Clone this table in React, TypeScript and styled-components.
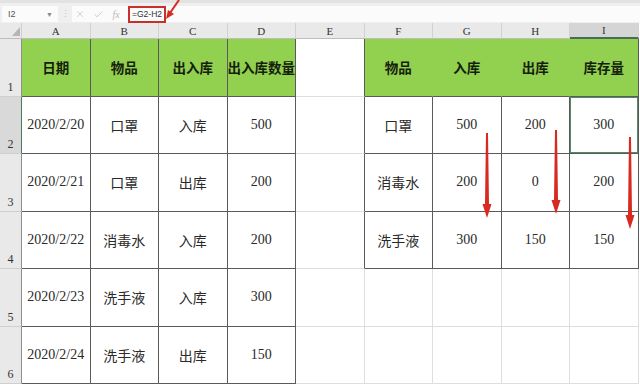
import React from 'react';
import styled, { createGlobalStyle } from 'styled-components';
import { X, Check } from 'lucide-react';

const GlobalStyle = createGlobalStyle`
  body {
    margin: 0;
    background: #ffffff;
    overflow: hidden;
  }
`;

const Page = styled.div`
  position: relative;
  width: 640px;
  height: 384px;
  overflow: hidden;
  background: #ffffff;
  font-family: 'Liberation Serif', 'Noto Sans CJK SC', serif;
`;

const FormulaBar = styled.div`
  display: flex;
  align-items: center;
  height: 23px;
  box-sizing: border-box;
  padding: 3px 0 1px 0;
  background: #efefef;
  border-top: 3px solid #e2e2e2;
`;

const NameBox = styled.div`
  display: flex;
  align-items: center;
  justify-content: space-between;
  width: 56px;
  height: 16px;
  box-sizing: border-box;
  margin-left: 2px;
  padding: 0 5px 0 6px;
  background: #fbfbfb;
  font-family: 'Liberation Sans', sans-serif;
  font-size: 9px;
  color: #555;
`;

const Caret = styled.span`
  font-size: 7px;
  color: #888;
`;

const Grip = styled.div`
  width: 14px;
  text-align: center;
  font-size: 9px;
  color: #c4c4c4;
`;

const InputArea = styled.div`
  flex: 1;
  display: flex;
  align-items: center;
  height: 16px;
  background: #fbfbfb;
  padding-left: 2px;
  gap: 6px;
`;

const ToolIcon = styled.span`
  display: flex;
  align-items: center;
  justify-content: center;
  width: 12px;
  color: #b8b8b8;
  font-family: 'Liberation Serif', serif;
  font-style: italic;
  font-size: 10px;
`;

const FormulaText = styled.div`
  padding: 0 2px;
  height: 17px;
  box-sizing: border-box;
  display: flex;
  align-items: center;
  border: 2px solid #c9302c;
  font-family: 'Liberation Sans', sans-serif;
  font-size: 8.5px;
  color: #333;
`;

const Sheet = styled.div`
  display: grid;
  grid-template-columns: 22px repeat(9, 68.5px);
  grid-template-rows: 16px repeat(6, 57.5px);
`;

const Corner = styled.div`
  background: #e9e9e9;
  border-right: 1px solid #cfcfcf;
  border-bottom: 1px solid #bdbdbd;
  display: flex;
  align-items: flex-end;
  justify-content: flex-end;
  padding: 0 1px 2px 0;
`;

const ColHead = styled.div<{ $active?: boolean }>`
  display: flex;
  align-items: center;
  justify-content: center;
  background: ${(p) => (p.$active ? '#d5d5d5' : '#e9e9e9')};
  border-right: 1px solid #d2d2d2;
  border-bottom: ${(p) => (p.$active ? '2px solid #4a6b57' : '1px solid #bdbdbd')};
  font-size: 11px;
  color: #333;
`;

const RowHead = styled.div<{ $active?: boolean }>`
  display: flex;
  align-items: flex-end;
  justify-content: center;
  padding-bottom: 1px;
  box-sizing: border-box;
  background: ${(p) => (p.$active ? '#d9d9d9' : '#e9e9e9')};
  border-right: 1px solid ${(p) => (p.$active ? '#4a7a5c' : '#8e8e8e')};
  border-bottom: 1px solid #cfcfcf;
  font-size: 12px;
  color: #333;
`;

const Cell = styled.div<{ $head?: boolean; $edge?: 'dark' | 'green' | 'light'; $bottom?: 'dark' | 'light'; $selected?: boolean }>`
  display: flex;
  align-items: center;
  justify-content: center;
  box-sizing: border-box;
  background: ${(p) => (p.$head ? '#92d050' : '#ffffff')};
  border-right: 1px solid
    ${(p) => (p.$edge === 'dark' ? '#5a5a5a' : p.$edge === 'green' ? '#92d050' : '#dedede')};
  border-bottom: 1px solid ${(p) => (p.$bottom === 'dark' ? '#5a5a5a' : '#dedede')};
  box-shadow: ${(p) => (p.$selected ? 'inset 0 0 0 1px #4f8a66' : 'none')};
  font-size: ${(p) => (p.$head ? '13.5px' : '14px')};
  font-weight: ${(p) => (p.$head ? 700 : 400)};
  color: ${(p) => (p.$head ? '#15200c' : '#2a2a2a')};
  white-space: nowrap;
`;

const Overlay = styled.svg`
  position: absolute;
  left: 0;
  top: 0;
  pointer-events: none;
`;

const columns = ['A', 'B', 'C', 'D', 'E', 'F', 'G', 'H', 'I'];

const left = [
  ['日期', '物品', '出入库', '出入库数量'],
  ['2020/2/20', '口罩', '入库', '500'],
  ['2020/2/21', '口罩', '出库', '200'],
  ['2020/2/22', '消毒水', '入库', '200'],
  ['2020/2/23', '洗手液', '入库', '300'],
  ['2020/2/24', '洗手液', '出库', '150'],
];

const right = [
  ['物品', '入库', '出库', '库存量'],
  ['口罩', '500', '200', '300'],
  ['消毒水', '200', '0', '200'],
  ['洗手液', '300', '150', '150'],
];

const DownArrow: React.FC<{ x: number; y1: number; y2: number }> = ({ x, y1, y2 }) => {
  const head = 14;
  const neck = y2 - head;
  return (
    <polygon
      fill="#d82a20"
      points={`${x - 1},${y1} ${x + 1},${y1} ${x + 2},${neck} ${x + 4.5},${neck} ${x},${y2} ${x - 4.5},${neck} ${x - 2},${neck}`}
    />
  );
};

const App: React.FC = () => {
  return (
    <Page>
      <GlobalStyle />
      <FormulaBar>
        <NameBox>
          I2
          <Caret>▼</Caret>
        </NameBox>
        <Grip>⋮</Grip>
        <InputArea>
          <ToolIcon>
            <X size={10} strokeWidth={1.5} />
          </ToolIcon>
          <ToolIcon>
            <Check size={11} strokeWidth={1.5} />
          </ToolIcon>
          <ToolIcon>fx</ToolIcon>
          <FormulaText>=G2-H2</FormulaText>
        </InputArea>
      </FormulaBar>
      <Sheet>
        <Corner>
          <svg width="8" height="9" viewBox="0 0 8 9">
            <polygon points="8,0 8,9 0,9" fill="#b5b5b5" />
          </svg>
        </Corner>
        {columns.map((c) => (
          <ColHead key={c} $active={c === 'I'}>
            {c}
          </ColHead>
        ))}
        {left.map((row, r) => (
          <React.Fragment key={r}>
            <RowHead $active={r === 1}>{r + 1}</RowHead>
            {row.map((text, i) => (
              <Cell key={`l${i}`} $head={r === 0} $edge="dark" $bottom="dark">
                {text}
              </Cell>
            ))}
            <Cell $edge={r < right.length ? 'dark' : 'light'} />
            {r < right.length
              ? right[r].map((text, i) => (
                  <Cell
                    key={`r${i}`}
                    $head={r === 0}
                    $edge={r === 0 && i < 3 ? 'green' : 'dark'}
                    $bottom="dark"
                    $selected={r === 1 && i === 3}
                  >
                    {text}
                  </Cell>
                ))
              : [0, 1, 2, 3].map((i) => <Cell key={`b${i}`} />)}
          </React.Fragment>
        ))}
      </Sheet>
      <Overlay width="640" height="384" viewBox="0 0 640 384">
        <DownArrow x={487} y1={133} y2={218} />
        <DownArrow x={556} y1={130} y2={214} />
        <DownArrow x={630} y1={137} y2={229} />
        <line x1="179" y1="0" x2="170" y2="13" stroke="#d82a20" strokeWidth="2" />
        <polygon points="166,19 168,10 174,14" fill="#d82a20" />
      </Overlay>
    </Page>
  );
};

export default App;
